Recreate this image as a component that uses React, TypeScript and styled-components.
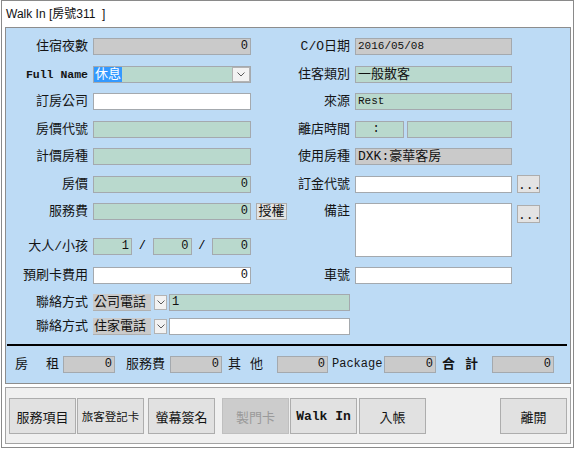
import React from 'react';
import styled, { createGlobalStyle } from 'styled-components';

const Global = createGlobalStyle`
  html, body { margin: 0; padding: 0; background: #ffffff; }
  body { font-family: "Noto Sans CJK TC", "Liberation Sans", sans-serif; }
`;

const MIXED = `"Liberation Mono", "Noto Sans CJK TC", monospace`;

type Tone = 'gray' | 'green' | 'white';
const toneBg: Record<Tone, string> = {
  gray: '#cacaca',
  green: '#b9d9cd',
  white: '#ffffff',
};

const Window = styled.div`
  box-sizing: border-box;
  margin-left: 1px;
  width: 573px;
  height: 448px;
  border: 1px solid #8a8a8a;
  padding: 0 2px 3px 3px;
  display: flex;
  flex-direction: column;
  background: #ffffff;
`;

const TitleBar = styled.div`
  height: 26px;
  line-height: 26px;
  padding-left: 1px;
  font-family: "Liberation Sans", "Noto Sans CJK TC", sans-serif;
  font-size: 12px;
  color: #111;
  white-space: pre;
`;

const FormPanel = styled.div`
  box-sizing: border-box;
  height: 357px;
  border: 1px solid #8d8d8d;
  background: #bddbf5;
  display: flex;
  flex-direction: column;
`;

const FormGrid = styled.div`
  display: grid;
  padding: 10px 0 0 4px;
  grid-template-columns: 78px 158px 33px 56px 157px 23px;
  grid-template-rows: 28px 27px 28px 27px 28px 27px 35px 29px 27px 24px 17px;
  column-gap: 5px;
  align-items: start;
`;

const Label = styled.div<{ $col: number; $row: number; $mono?: boolean }>`
  grid-column: ${(p) => p.$col};
  grid-row: ${(p) => p.$row};
  text-align: right;
  height: 17px;
  line-height: 17px;
  white-space: nowrap;
  font-family: ${MIXED};
  font-size: ${(p) => (p.$mono ? '11.5px' : '13px')};
  font-weight: ${(p) => (p.$mono ? 700 : 400)};
  color: #141414;
`;

const Field = styled.div<{ $tone: Tone; $right?: boolean; $h?: number; $size?: number }>`
  box-sizing: border-box;
  height: ${(p) => p.$h ?? 17}px;
  border: 1px solid #a4a9ae;
  background: ${(p) => toneBg[p.$tone]};
  font-family: ${MIXED};
  font-size: ${(p) => p.$size ?? 12}px;
  line-height: 15px;
  padding: 0 2px;
  text-align: ${(p) => (p.$right ? 'right' : 'left')};
  color: #111;
  white-space: pre;
  overflow: hidden;
`;

const Cell = styled.div<{ $col: string | number; $row: string | number }>`
  grid-column: ${(p) => p.$col};
  grid-row: ${(p) => p.$row};
`;

const Combo = styled.div`
  box-sizing: border-box;
  height: 17px;
  border: 1px solid #a4a9ae;
  background: ${toneBg.green};
  display: flex;
  align-items: center;
`;

const Selected = styled.span`
  background: #3399ff;
  color: #fff;
  font-family: ${MIXED};
  font-size: 13px;
  line-height: 15px;
  height: 15px;
  padding: 0 1px;
`;

const DropBtn = styled.div<{ $w: number; $push?: boolean }>`
  box-sizing: border-box;
  width: ${(p) => p.$w}px;
  height: 15px;
  margin-left: ${(p) => (p.$push ? 'auto' : '0')};
  border: 1px solid #b3b3b3;
  background: #f2f2f2;
  display: flex;
  align-items: center;
  justify-content: center;
  flex: none;
`;

const SmallBtn = styled.div<{ $mt?: number; $w?: number; $h?: number; $dots?: boolean }>`
  box-sizing: border-box;
  width: ${(p) => p.$w ?? 23}px;
  height: ${(p) => p.$h ?? 18}px;
  margin-top: ${(p) => p.$mt ?? 0}px;
  border: 1px solid #adadad;
  background: #e3e3e3;
  font-family: ${MIXED};
  font-size: 13px;
  line-height: ${(p) => (p.$dots ? '20px' : '15px')};
  text-align: center;
  color: #111;
`;

const Triple = styled.div`
  display: flex;
  align-items: center;
`;

const TripleBox = styled(Field)`
  width: 39px;
  flex: none;
`;

const TimeBox = styled(Field)`
  width: 49px;
  flex: none;
`;

const TimeRest = styled(Field)`
  flex: 1;
  margin-left: 3px;
`;

const Slash = styled.span`
  width: 21px;
  text-align: center;
  font-family: ${MIXED};
  font-size: 12px;
  line-height: 17px;
`;

const ContactRow = styled.div<{ $row: number }>`
  grid-column: 2 / 5;
  grid-row: ${(p) => p.$row};
  display: flex;
  align-items: center;
  gap: 3px;
`;

const PickBox = styled.div`
  box-sizing: border-box;
  width: 58px;
  height: 17px;
  background: ${toneBg.gray};
  border-bottom: 1px solid #b0b0b0;
  font-family: ${MIXED};
  font-size: 13px;
  line-height: 17px;
  padding-left: 1px;
  color: #111;
  flex: none;
`;

const ContactInput = styled(Field)`
  flex: 1;
  margin-left: -1px;
`;

const Rule = styled.div`
  height: 2px;
  background: #000;
  margin: 9px 3px 0 1px;
`;

const Totals = styled.div`
  display: grid;
  margin-top: 10px;
  padding-left: 9px;
  grid-template-columns: 48px 52px 55px 52px 55px 51px 56px 52px 56px 62px;
  align-items: center;
`;

const TotalLabel = styled.div<{ $pl?: number; $ls?: number; $bold?: boolean; $mono?: boolean }>`
  padding-left: ${(p) => p.$pl ?? 0}px;
  letter-spacing: ${(p) => p.$ls ?? 0}px;
  font-family: ${MIXED};
  font-size: ${(p) => (p.$mono ? '12px' : '13px')};
  font-weight: ${(p) => (p.$bold ? 700 : 400)};
  line-height: 17px;
  white-space: nowrap;
  color: #141414;
`;

const ButtonPanel = styled.div`
  box-sizing: border-box;
  margin-top: 3px;
  height: 57px;
  border: 1px solid #a3a3a3;
  background: #f0f0f0;
  padding: 10px 3px 0 3px;
  display: flex;
  align-items: flex-start;
`;

const ActionBtn = styled.div<{ $ml?: number; $auto?: boolean; $disabled?: boolean; $size?: number; $mono?: boolean }>`
  box-sizing: border-box;
  width: 67px;
  height: 36px;
  margin-left: ${(p) => (p.$auto ? 'auto' : `${p.$ml ?? 0}px`)};
  border: 1px solid ${(p) => (p.$disabled ? '#bfbfbf' : '#adadad')};
  background: ${(p) => (p.$disabled ? '#cccccc' : '#e1e1e1')};
  color: ${(p) => (p.$disabled ? '#9a9a9a' : '#141414')};
  font-family: ${MIXED};
  font-size: ${(p) => p.$size ?? 13}px;
  font-weight: ${(p) => (p.$mono ? 700 : 400)};
  display: flex;
  align-items: center;
  justify-content: center;
  white-space: pre;
  flex: none;
`;

const Chevron = () => (
  <svg width="8" height="5" viewBox="0 0 8 5">
    <path d="M0.5 0.5 L4 4 L7.5 0.5" fill="none" stroke="#5a5a5a" strokeWidth="1" />
  </svg>
);

export default function App() {
  return (
    <>
      <Global />
      <Window>
        <TitleBar>Walk In [房號311  ]</TitleBar>
        <FormPanel>
          <FormGrid>
            <Label $col={1} $row={1}>住宿夜數</Label>
            <Cell $col={2} $row={1}><Field $tone="gray" $right>0</Field></Cell>
            <Label $col={4} $row={1}>C/O日期</Label>
            <Cell $col={5} $row={1}><Field $tone="gray" $size={11}>2016/05/08</Field></Cell>

            <Label $col={1} $row={2} $mono>Full Name</Label>
            <Cell $col={2} $row={2}>
              <Combo>
                <Selected>休息</Selected>
                <DropBtn $w={18} $push><Chevron /></DropBtn>
              </Combo>
            </Cell>
            <Label $col={4} $row={2}>住客類別</Label>
            <Cell $col={5} $row={2}><Field $tone="green" $size={13}>一般散客</Field></Cell>

            <Label $col={1} $row={3}>訂房公司</Label>
            <Cell $col={2} $row={3}><Field $tone="white" /></Cell>
            <Label $col={4} $row={3}>來源</Label>
            <Cell $col={5} $row={3}><Field $tone="green" $size={11}>Rest</Field></Cell>

            <Label $col={1} $row={4}>房價代號</Label>
            <Cell $col={2} $row={4}><Field $tone="green" /></Cell>
            <Label $col={4} $row={4}>離店時間</Label>
            <Cell $col={5} $row={4}>
              <Triple>
                <TimeBox $tone="green">{'  :'}</TimeBox>
                <TimeRest $tone="green" />
              </Triple>
            </Cell>

            <Label $col={1} $row={5}>計價房種</Label>
            <Cell $col={2} $row={5}><Field $tone="green" /></Cell>
            <Label $col={4} $row={5}>使用房種</Label>
            <Cell $col={5} $row={5}><Field $tone="gray" $size={13}>DXK:豪華客房</Field></Cell>

            <Label $col={1} $row={6}>房價</Label>
            <Cell $col={2} $row={6}><Field $tone="green" $right>0</Field></Cell>
            <Label $col={4} $row={6}>訂金代號</Label>
            <Cell $col={5} $row={6}><Field $tone="white" /></Cell>
            <Cell $col={6} $row={6}><SmallBtn $mt={-1} $dots>...</SmallBtn></Cell>

            <Label $col={1} $row={7}>服務費</Label>
            <Cell $col={2} $row={7}><Field $tone="green" $right>0</Field></Cell>
            <Cell $col={3} $row={7}><SmallBtn $w={31} $h={17}>授權</SmallBtn></Cell>
            <Label $col={4} $row={7}>備註</Label>
            <Cell $col={5} $row="7 / 9"><Field $tone="white" $h={54} /></Cell>
            <Cell $col={6} $row={7}><SmallBtn $mt={2} $dots>...</SmallBtn></Cell>

            <Label $col={1} $row={8}>大人/小孩</Label>
            <Cell $col={2} $row={8}>
              <Triple>
                <TripleBox $tone="green" $right>1</TripleBox>
                <Slash>/</Slash>
                <TripleBox $tone="green" $right>0</TripleBox>
                <Slash>/</Slash>
                <TripleBox $tone="green" $right>0</TripleBox>
              </Triple>
            </Cell>

            <Label $col={1} $row={9}>預刷卡費用</Label>
            <Cell $col={2} $row={9}><Field $tone="white" $right>0</Field></Cell>
            <Label $col={4} $row={9}>車號</Label>
            <Cell $col={5} $row={9}><Field $tone="white" /></Cell>

            <Label $col={1} $row={10}>聯絡方式</Label>
            <ContactRow $row={10}>
              <PickBox>公司電話</PickBox>
              <DropBtn $w={13}><Chevron /></DropBtn>
              <ContactInput $tone="green">1</ContactInput>
            </ContactRow>

            <Label $col={1} $row={11}>聯絡方式</Label>
            <ContactRow $row={11}>
              <PickBox>住家電話</PickBox>
              <DropBtn $w={13}><Chevron /></DropBtn>
              <ContactInput $tone="white" />
            </ContactRow>
          </FormGrid>

          <Rule />

          <Totals>
            <TotalLabel $ls={18}>房租</TotalLabel>
            <Field $tone="gray" $right>0</Field>
            <TotalLabel $pl={11}>服務費</TotalLabel>
            <Field $tone="gray" $right>0</Field>
            <TotalLabel $pl={6} $ls={9}>其他</TotalLabel>
            <Field $tone="gray" $right>0</Field>
            <TotalLabel $pl={4} $mono>Package</TotalLabel>
            <Field $tone="gray" $right>0</Field>
            <TotalLabel $pl={6} $ls={10} $bold>合計</TotalLabel>
            <Field $tone="gray" $right>0</Field>
          </Totals>
        </FormPanel>

        <ButtonPanel>
          <ActionBtn>服務項目</ActionBtn>
          <ActionBtn $ml={1} $size={11.5}>旅客登記卡</ActionBtn>
          <ActionBtn $ml={4}>螢幕簽名</ActionBtn>
          <ActionBtn $ml={7} $disabled>製門卡</ActionBtn>
          <ActionBtn $ml={1} $mono>Walk In</ActionBtn>
          <ActionBtn $ml={2}>入帳</ActionBtn>
          <ActionBtn $auto>離開</ActionBtn>
        </ButtonPanel>
      </Window>
    </>
  );
}
